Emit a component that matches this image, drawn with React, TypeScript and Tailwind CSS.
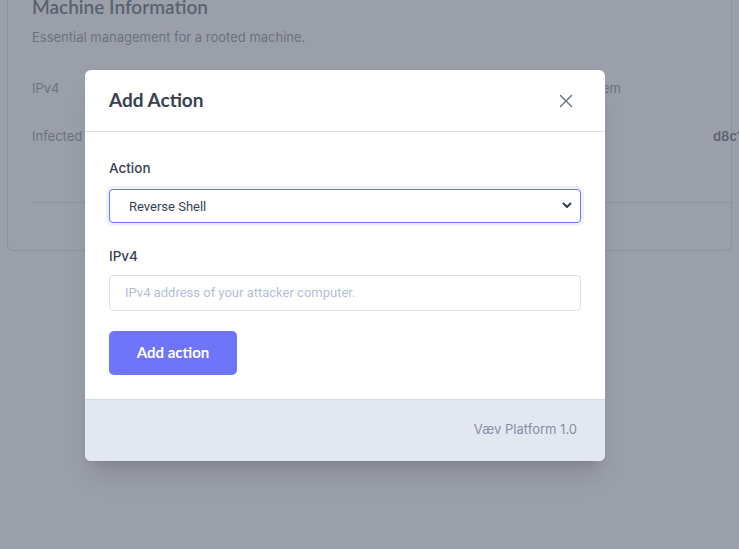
import { X } from 'lucide-react'

export default function App() {
  return (
    <div className="relative h-[549px] w-[739px] overflow-hidden bg-white" style={{ fontFamily: 'Inter, "Noto Sans", sans-serif' }}>
      {/* page behind the modal */}
      <div className="-mt-[24px] px-[7px]">
        <div className="rounded-b-md border border-[#d1d5db] px-6 pt-4 pb-[47px]">
          <h2 className="text-[19px] font-semibold text-[#374151]" style={{ fontFamily: 'Lato, sans-serif' }}>Machine Information</h2>
          <p className="mt-[6px] text-[13px] text-[#6b7280]">Essential management for a rooted machine.</p>
          <div className="mt-[32px] flex text-[13px] text-[#6b7280]">
            <div className="w-[479px] shrink-0">IPv4</div>
            <div className="whitespace-nowrap">Operating System</div>
          </div>
          <div className="mt-[28px] flex text-[13px] text-[#6b7280]">
            <div className="w-[681px] shrink-0">Infected since</div>
            <div className="font-semibold text-[#374151] whitespace-nowrap">d8c1a4f2</div>
          </div>
          <div className="mt-[56px] -mr-6 border-t border-[#d1d5db]" />
        </div>
      </div>

      {/* overlay */}
      <div className="absolute inset-0 bg-[#6b7280]/[0.68]" />

      {/* modal */}
      <div className="absolute left-[85px] top-[70px] w-[520px] overflow-hidden rounded-md bg-white shadow-xl">
        <div className="flex h-[62px] items-center justify-between border-b border-[#dde2ea] px-6">
          <h3 className="text-[19px] font-bold text-[#374151]" style={{ fontFamily: 'Lato, sans-serif' }}>Add Action</h3>
          <X className="mr-[4px] h-[22px] w-[22px] text-[#6b7280]" strokeWidth={1.5} />
        </div>
        <div className="px-6 pt-[26px] pb-[24px]">
          <label className="block text-[13.5px] font-medium text-[#374151]">Action</label>
          <div className="relative mt-[11px]">
            <select className="h-[34px] w-full appearance-none rounded-[4px] border border-[#6f75f8] bg-white pl-[19px] text-[13px] text-[#374151] outline-none ring-[3px] ring-[#eef0ff]" style={{ fontFamily: 'Roboto, sans-serif' }} defaultValue="rs">
              <option value="rs">Reverse Shell</option>
            </select>
            <svg className="pointer-events-none absolute right-[9px] top-[13px]" width="10" height="7" viewBox="0 0 10 7" fill="none">
              <path d="M1.5 1.5 L5 5 L8.5 1.5" stroke="#374151" strokeWidth="2" strokeLinecap="round" strokeLinejoin="round" />
            </svg>
          </div>
          <label className="mt-[23px] block text-[13.5px] font-medium text-[#374151]">IPv4</label>
          <input
            className="mt-[8px] h-[36px] w-full rounded-[4px] border border-[#dde2ea] px-[15px] text-[13px] text-[#374151] outline-none placeholder:text-[#b3bfd8]"
            style={{ fontFamily: 'Roboto, sans-serif' }}
            placeholder="IPv4 address of your attacker computer."
          />
          <button className="mt-[20px] h-[44px] w-[128px] rounded-[5px] bg-[#6f75f8] text-[15px] font-bold text-white" style={{ fontFamily: 'Lato, sans-serif' }}>
            Add action
          </button>
        </div>
        <div className="flex h-[62px] items-center justify-end border-t border-[#d6dbe4] bg-[#e3e7f0] px-7 text-[13px] text-[#8390a7]">
          Væv Platform 1.0
        </div>
      </div>
    </div>
  )
}
